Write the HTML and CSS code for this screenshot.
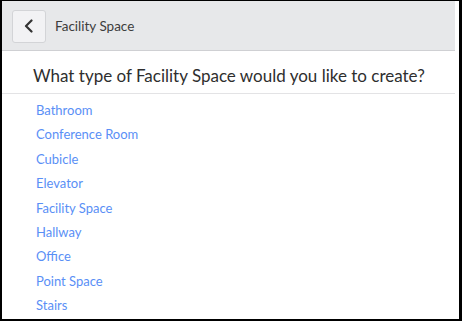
FILE: index.html
```html
<!DOCTYPE html>
<html lang="en">
<head>
  <meta charset="UTF-8">
  <meta name="viewport" content="width=device-width, initial-scale=1.0">
  <title>Facility Space</title>
  <link rel="stylesheet" href="styles.css">
</head>
<body>
  <div class="frame">
    <div class="page">
      <div class="header">
        <button class="back-btn" aria-label="Back">
          <svg width="12" height="14" viewBox="0 0 12 14">
            <path d="M8.5 1.5 L3 7 L8.5 12.5" fill="none" stroke="#333" stroke-width="2.2" stroke-linecap="round" stroke-linejoin="round"/>
          </svg>
        </button>
        <span class="title">Facility Space</span>
      </div>
      <h1 class="question">What type of Facility Space would you like to create?</h1>
      <ul class="type-list">
        <li><a href="#">Bathroom</a></li>
        <li><a href="#">Conference Room</a></li>
        <li><a href="#">Cubicle</a></li>
        <li><a href="#">Elevator</a></li>
        <li><a href="#">Facility Space</a></li>
        <li><a href="#">Hallway</a></li>
        <li><a href="#">Office</a></li>
        <li><a href="#">Point Space</a></li>
        <li><a href="#">Stairs</a></li>
      </ul>
    </div>
  </div>
</body>
</html>
```

FILE: styles.css
```css
html, body {
  margin: 0;
  padding: 0;
}
body {
  font-family: 'Lato', 'Open Sans', sans-serif;
  color: #333;
  background: #fff;
}
.frame {
  width: 462px;
  height: 321px;
  box-sizing: border-box;
  border-style: solid;
  border-color: #000;
  border-width: 1px 3px 2px 2px;
  overflow: hidden;
}
.page {
  padding-right: 4px;
  height: 100%;
}
.header {
  height: 49px;
  background: #e7e8ea;
  border-bottom: 1px solid #cfd0d3;
  display: flex;
  align-items: center;
  padding-left: 10px;
}
.back-btn {
  width: 34px;
  height: 33px;
  margin-top: 1px;
  background: #f2f2f4;
  border: 1px solid #d3d4d7;
  border-radius: 3px;
  display: flex;
  align-items: center;
  justify-content: center;
  padding: 0;
}
.title {
  margin-left: 9px;
  font-size: 13.5px;
  color: #3d3d3d;
}
.question {
  margin: 0;
  padding: 13px 0 5px 31px;
  font-size: 17px;
  line-height: 24px;
  font-weight: normal;
  color: #2e2e2e;
  border-bottom: 1px solid #e3e3e5;
}
.type-list {
  list-style: none;
  margin: 0;
  padding: 4px 0 0 34px;
}
.type-list li {
  line-height: 24.4px;
  font-size: 13px;
}
.type-list a {
  color: #5a8ff6;
  text-decoration: none;
}
```
